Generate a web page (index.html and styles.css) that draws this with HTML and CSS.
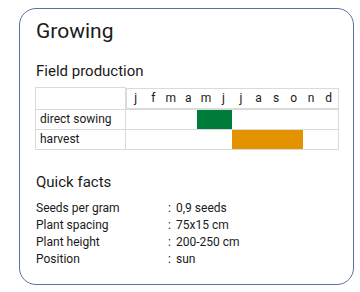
FILE: index.html
```html
<!DOCTYPE html>
<html>
<head>
<meta charset="utf-8">
<link rel="stylesheet" href="styles.css">
</head>
<body>
<div class="card">
  <h1 class="title">Growing</h1>
  <h2 class="section">Field production</h2>
  <table class="cal">
    <tr class="head">
      <td class="name"></td>
      <td class="months">
        <span>j</span><span>f</span><span>m</span><span>a</span><span>m</span><span>j</span><span>j</span><span>a</span><span>s</span><span>o</span><span>n</span><span>d</span>
      </td>
    </tr>
    <tr>
      <td class="name">direct sowing</td>
      <td class="bars"><div class="bar sow" style="margin-left:33.33%;width:16.67%"></div></td>
    </tr>
    <tr>
      <td class="name">harvest</td>
      <td class="bars"><div class="bar harvest" style="margin-left:50%;width:33.33%"></div></td>
    </tr>
  </table>
  <h2 class="section facts-title">Quick facts</h2>
  <dl class="facts">
    <dt>Seeds per gram</dt><dd>0,9 seeds</dd>
    <dt>Plant spacing</dt><dd>75x15 cm</dd>
    <dt>Plant height</dt><dd>200-250 cm</dd>
    <dt>Position</dt><dd>sun</dd>
  </dl>
</div>
</body>
</html>
```

FILE: styles.css
```css
html, body {
  margin: 0;
  padding: 0;
  background: #ffffff;
}
body {
  font-family: Roboto, "Liberation Sans", sans-serif;
  color: #1a1a1a;
  padding: 8px 0 0 19px;
}
.card {
  box-sizing: border-box;
  width: 335px;
  height: 277px;
  border: 1px solid #5b70ad;
  border-radius: 17px;
  padding: 9px 15px 0 16px;
}
.title {
  margin: 0;
  font-size: 21px;
  font-weight: 400;
  line-height: 26px;
}
.section {
  margin: 17px 0 0;
  font-size: 15px;
  font-weight: 400;
  line-height: 20px;
}
.cal {
  margin: 6px 0 0 -1px;
  border-collapse: collapse;
  width: 304px;
  font-size: 12px;
  line-height: 19px;
}
.cal td {
  border: 1px solid #dadada;
  padding: 0;
  height: 19px;
}
.cal td.name {
  width: 85px;
  padding-left: 4px;
}
.months {
  display: grid;
  grid-template-columns: repeat(12, 1fr);
  text-align: center;
}
.bars {
  vertical-align: top;
}
.bar {
  height: 19px;
}
.sow { background: #007c3a; }
.harvest { background: #e39200; }
.facts-title {
  margin-top: 22px;
}
.facts {
  margin: 8px 0 0;
  display: grid;
  grid-template-columns: 132px 1fr;
  font-size: 12px;
  line-height: 17.3px;
}
.facts dt, .facts dd {
  margin: 0;
}
.facts dd::before {
  content: ":";
  display: inline-block;
  width: 8px;
}
```
